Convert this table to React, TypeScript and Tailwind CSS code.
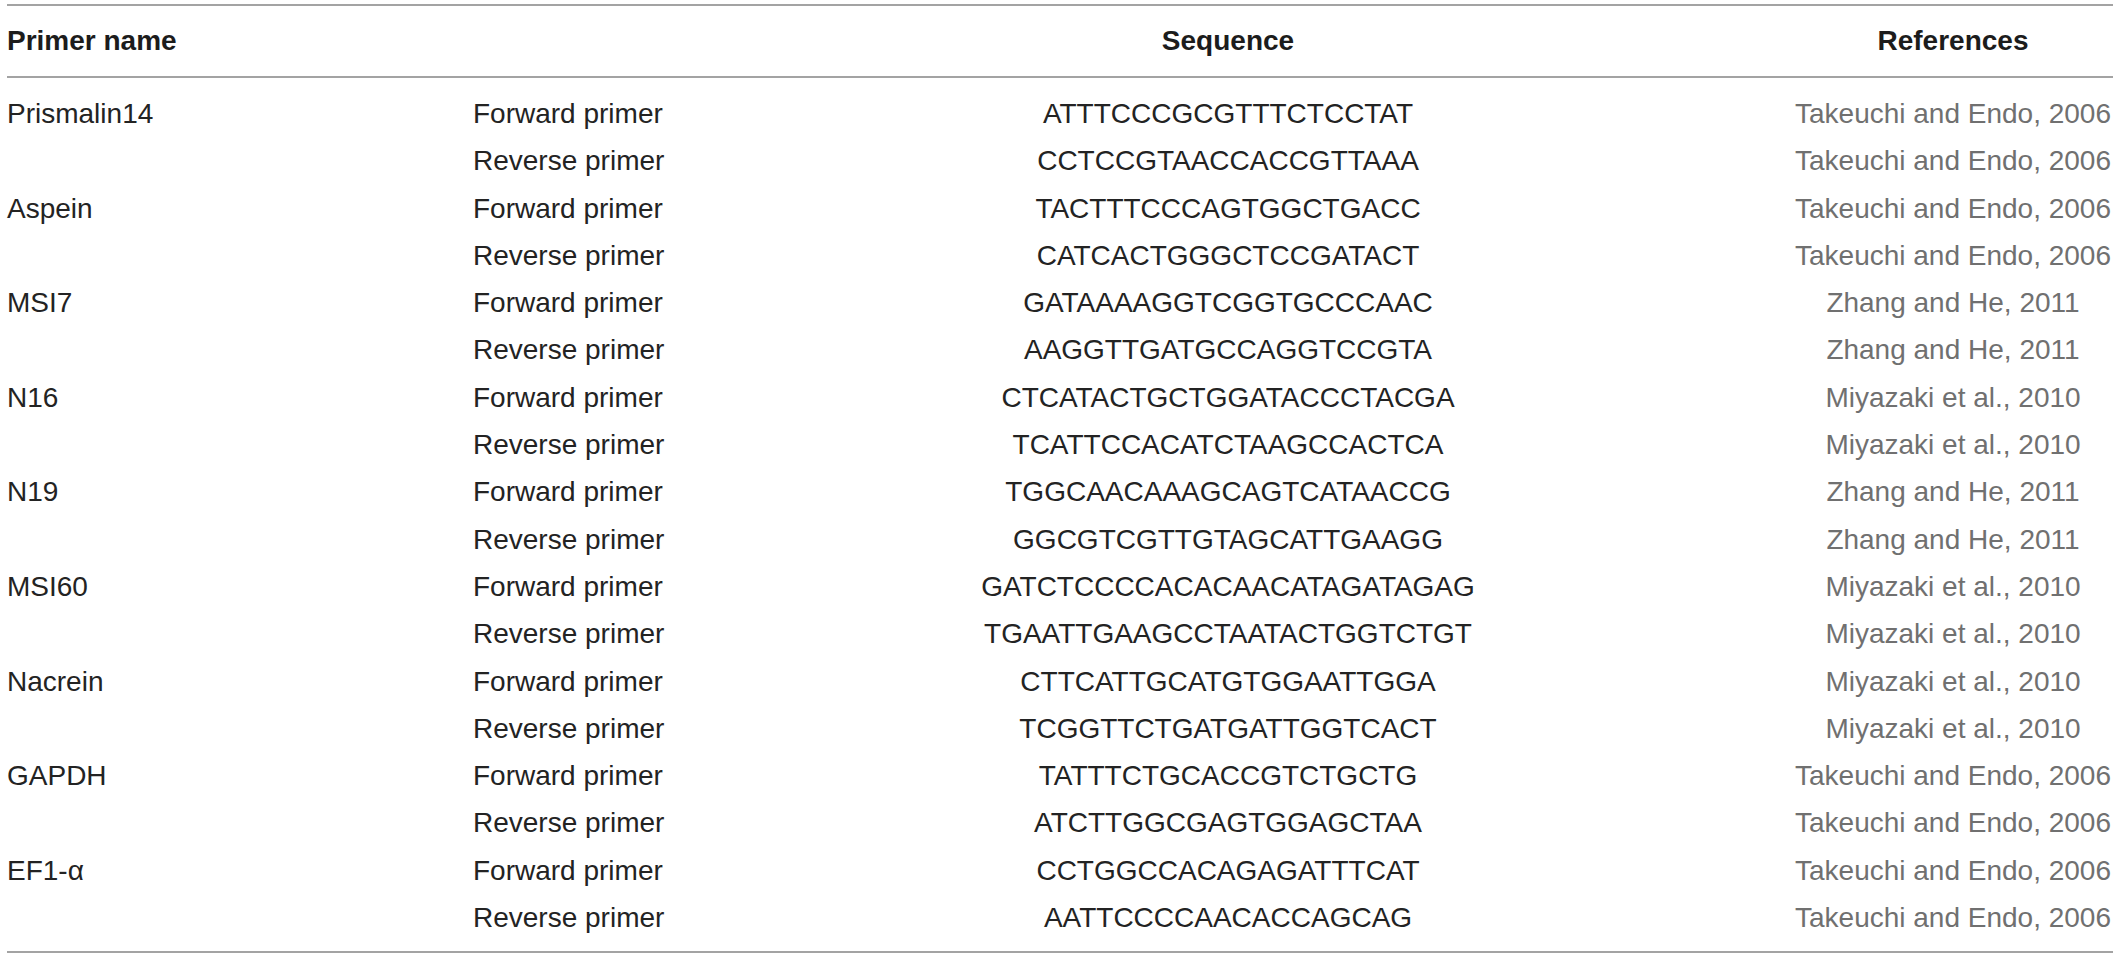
import React from "react";

type Row = { name?: string; dir: string; seq: string; ref: string };

const rows: Row[] = [
  { name: "Prismalin14", dir: "Forward primer", seq: "ATTTCCCGCGTTTCTCCTAT", ref: "Takeuchi and Endo, 2006" },
  { dir: "Reverse primer", seq: "CCTCCGTAACCACCGTTAAA", ref: "Takeuchi and Endo, 2006" },
  { name: "Aspein", dir: "Forward primer", seq: "TACTTTCCCAGTGGCTGACC", ref: "Takeuchi and Endo, 2006" },
  { dir: "Reverse primer", seq: "CATCACTGGGCTCCGATACT", ref: "Takeuchi and Endo, 2006" },
  { name: "MSI7", dir: "Forward primer", seq: "GATAAAAGGTCGGTGCCCAAC", ref: "Zhang and He, 2011" },
  { dir: "Reverse primer", seq: "AAGGTTGATGCCAGGTCCGTA", ref: "Zhang and He, 2011" },
  { name: "N16", dir: "Forward primer", seq: "CTCATACTGCTGGATACCCTACGA", ref: "Miyazaki et al., 2010" },
  { dir: "Reverse primer", seq: "TCATTCCACATCTAAGCCACTCA", ref: "Miyazaki et al., 2010" },
  { name: "N19", dir: "Forward primer", seq: "TGGCAACAAAGCAGTCATAACCG", ref: "Zhang and He, 2011" },
  { dir: "Reverse primer", seq: "GGCGTCGTTGTAGCATTGAAGG", ref: "Zhang and He, 2011" },
  { name: "MSI60", dir: "Forward primer", seq: "GATCTCCCCACACAACATAGATAGAG", ref: "Miyazaki et al., 2010" },
  { dir: "Reverse primer", seq: "TGAATTGAAGCCTAATACTGGTCTGT", ref: "Miyazaki et al., 2010" },
  { name: "Nacrein", dir: "Forward primer", seq: "CTTCATTGCATGTGGAATTGGA", ref: "Miyazaki et al., 2010" },
  { dir: "Reverse primer", seq: "TCGGTTCTGATGATTGGTCACT", ref: "Miyazaki et al., 2010" },
  { name: "GAPDH", dir: "Forward primer", seq: "TATTTCTGCACCGTCTGCTG", ref: "Takeuchi and Endo, 2006" },
  { dir: "Reverse primer", seq: "ATCTTGGCGAGTGGAGCTAA", ref: "Takeuchi and Endo, 2006" },
  { name: "EF1-α", dir: "Forward primer", seq: "CCTGGCCACAGAGATTTCAT", ref: "Takeuchi and Endo, 2006" },
  { dir: "Reverse primer", seq: "AATTCCCCAACACCAGCAG", ref: "Takeuchi and Endo, 2006" },
];

const cols = "grid grid-cols-[466px_190px_1130px_320px]";

export default function App() {
  return (
    <div className="w-[2119px] h-[958px] bg-white pl-[7px] pt-[4px] font-['Liberation_Sans',Arial,sans-serif] text-[28px]">
      <div className="w-[2106px]">
        <div className="h-[2px] bg-[#a3a3a3]" />

        {/* Header */}
        <div className={`${cols} h-[70px] leading-[70px] font-bold text-[#1c1c1c]`}>
          <div>Primer name</div>
          <div />
          <div className="text-center">Sequence</div>
          <div className="text-center">References</div>
        </div>

        <div className="h-[2px] bg-[#a3a3a3]" />

        {/* Body */}
        <div className="pt-[12px] pb-[10px]">
          {rows.map((r, i) => (
            <div key={i} className={`${cols} h-[47.3px] leading-[47.3px] whitespace-nowrap`}>
              <div className="text-[#232323]">{r.name ?? ""}</div>
              <div className="text-[#232323]">{r.dir}</div>
              <div className="text-center text-[#232323]">{r.seq}</div>
              <div className="text-center text-[#707070]">{r.ref}</div>
            </div>
          ))}
        </div>

        <div className="h-[2px] bg-[#a3a3a3]" />
      </div>
    </div>
  );
}
